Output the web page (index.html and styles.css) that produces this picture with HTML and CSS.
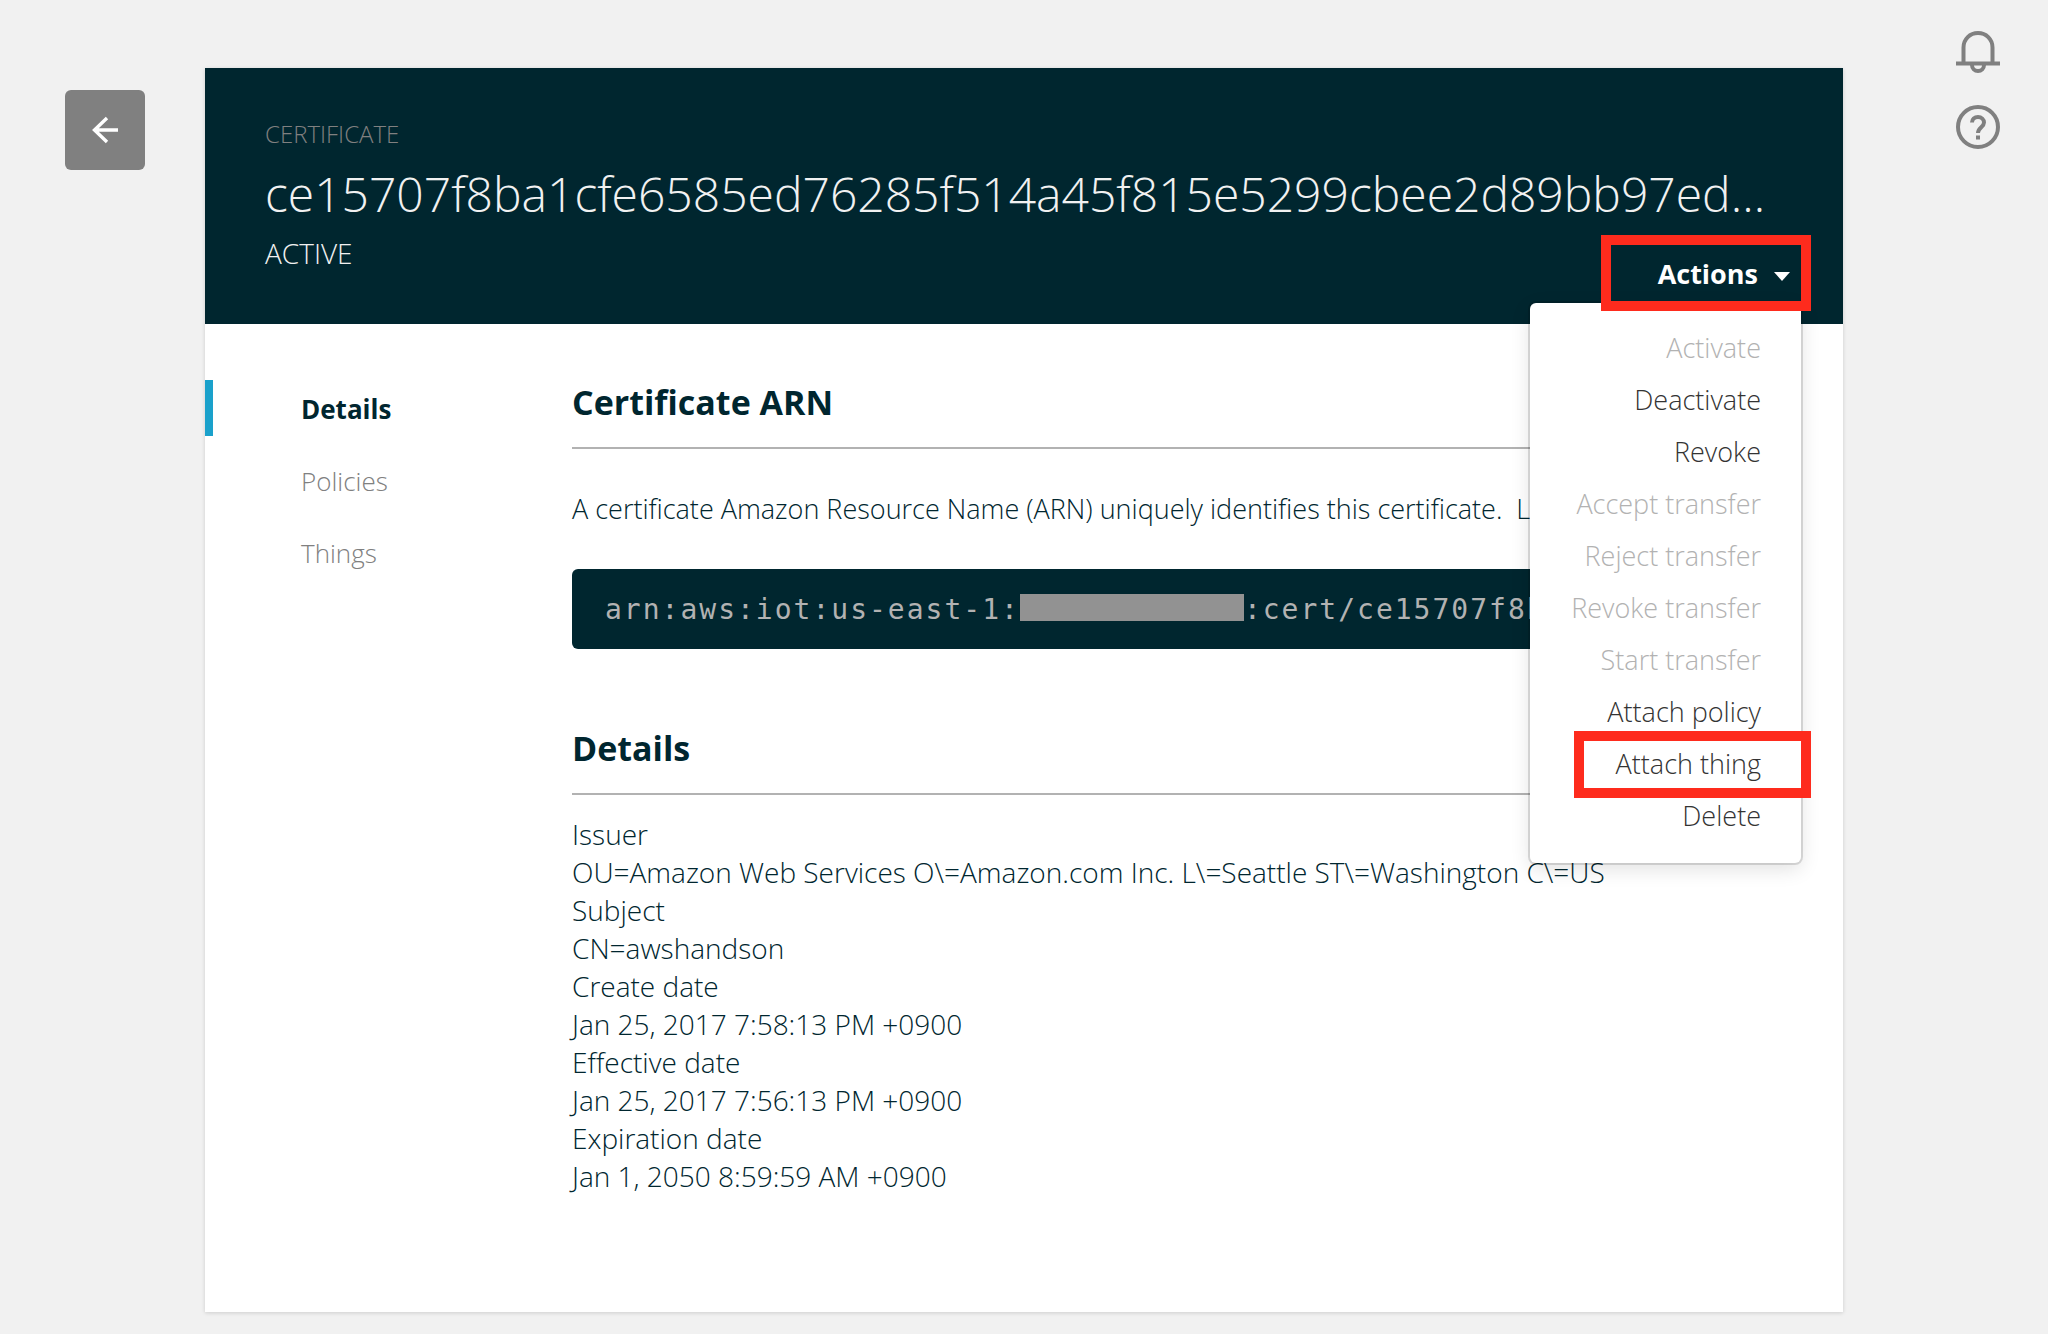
FILE: index.html
```html
<!DOCTYPE html>
<html lang="en">
<head>
<meta charset="utf-8">
<meta name="viewport" content="width=device-width, initial-scale=1">
<title>Certificate</title>
<link rel="stylesheet" href="styles.css">
</head>
<body>
<div class="page">
  <div class="rail rail-left">
    <button class="back" type="button" aria-label="Back">
      <svg width="28" height="28" viewBox="0 0 28 28" fill="none" stroke="currentColor" stroke-width="3.4" aria-hidden="true">
        <path d="M27 14H4M16 2 3.500 14 16 26"/>
      </svg>
    </button>
  </div>

  <main class="card">
    <header class="card-header">
      <p class="kind">CERTIFICATE</p>
      <h1 class="title">ce15707f8ba1cfe6585ed76285f514a45f815e5299cbee2d89bb97ed…</h1>
      <div class="status-row">
        <p class="status">ACTIVE</p>
        <div class="actions">
          <button class="actions-button" type="button" aria-haspopup="true" aria-expanded="true">Actions<span class="caret"></span></button>
          <ul class="menu">
            <li><button type="button" disabled>Activate</button></li>
            <li><button type="button">Deactivate</button></li>
            <li><button type="button">Revoke</button></li>
            <li><button type="button" disabled>Accept transfer</button></li>
            <li><button type="button" disabled>Reject transfer</button></li>
            <li><button type="button" disabled>Revoke transfer</button></li>
            <li><button type="button" disabled>Start transfer</button></li>
            <li><button type="button">Attach policy</button></li>
            <li class="marked"><button type="button">Attach thing</button></li>
            <li><button type="button">Delete</button></li>
          </ul>
        </div>
      </div>
    </header>

    <div class="card-body">
      <nav class="tabs">
        <a class="tab current" href="#details">Details</a>
        <a class="tab" href="#policies">Policies</a>
        <a class="tab" href="#things">Things</a>
      </nav>
      <div class="content">
        <section>
          <h2 class="heading">Certificate ARN</h2>
          <p class="intro">A certificate Amazon Resource Name (ARN) uniquely identifies this certificate. &nbsp;L</p>
          <div class="arn">arn:aws:iot:us-east-1:<span class="redacted"></span>:cert/ce15707f8b</div>
        </section>
        <section id="details">
          <h2 class="heading">Details</h2>
          <dl class="facts">
            <dt>Issuer</dt>
            <dd>OU=Amazon Web Services O\=Amazon.com Inc. L\=Seattle ST\=Washington C\=US</dd>
            <dt>Subject</dt>
            <dd>CN=awshandson</dd>
            <dt>Create date</dt>
            <dd>Jan 25, 2017 7:58:13 PM +0900</dd>
            <dt>Effective date</dt>
            <dd>Jan 25, 2017 7:56:13 PM +0900</dd>
            <dt>Expiration date</dt>
            <dd>Jan 1, 2050 8:59:59 AM +0900</dd>
          </dl>
        </section>
      </div>
    </div>
  </main>

  <div class="rail rail-right">
    <button class="tool" type="button" aria-label="Notifications">
      <svg width="44" height="44" viewBox="0 0 44 44" fill="none" stroke="currentColor" stroke-width="4" aria-hidden="true">
        <path d="M0 33.500H44M7.500 33V17.500C7.500 9 14 3 22 3S36.500 9 36.500 17.500V33"/>
        <path d="M16 35a6 6 0 0 0 12 0"/>
      </svg>
    </button>
    <button class="tool" type="button" aria-label="Help">
      <svg width="44" height="44" viewBox="0 0 44 44" fill="none" stroke="currentColor" stroke-width="4" aria-hidden="true">
        <circle cx="22" cy="22" r="20"/>
        <path d="M16 17.500C16 14 18.500 12 22 12S28 14.500 28 17.500C28 22 22 22.500 22 28M22 30.500V34.500"/>
      </svg>
    </button>
  </div>
</div>
</body>
</html>
```

FILE: styles.css
```css
* {
  box-sizing: border-box;
}

body {
  margin: 0;
  background: #f1f1f1;
  color: #00262f;
  font: 300 28px/38px "Open Sans", "Noto Sans", sans-serif;
}

h1, h2, p, ul, dl, dd {
  margin: 0;
  padding: 0;
}

button {
  border: 0;
  padding: 0;
  background: none;
  color: inherit;
  font: inherit;
}

a {
  color: inherit;
  text-decoration: none;
}

.page {
  display: grid;
  grid-template-columns: 205px minmax(0, 1fr) 205px;
  padding-bottom: 22px;
}

.rail-left {
  padding: 90px 60px 0 65px;
}

.back {
  display: grid;
  place-items: center;
  width: 80px;
  height: 80px;
  border-radius: 6px;
  background: #808080;
  color: #fff;
}

.rail-right {
  display: flex;
  flex-direction: column;
  align-items: flex-end;
  gap: 31px;
  padding: 30px 48px 0 0;
}

.tool {
  height: 44px;
  color: #808080;
}

.tool svg {
  display: block;
}

.card {
  margin-top: 68px;
  background: #fff;
  box-shadow: 0 1px 4px rgba(0, 0, 0, 0.15);
}

.card-header {
  padding: 50px 32px 13px 60px;
  background: #00262f;
  color: #f1f1f1;
}

.kind {
  color: #808080;
  font-size: 24px;
  line-height: 32px;
}

.title {
  margin: 12px 0 9px;
  font-size: 48px;
  font-weight: 300;
  line-height: 64px;
  white-space: nowrap;
}

.status-row {
  display: flex;
  justify-content: space-between;
  align-items: flex-start;
}

.status {
  line-height: 36px;
}

.actions {
  position: relative;
}

.actions-button {
  position: relative;
  z-index: 2;
  display: flex;
  justify-content: flex-end;
  align-items: center;
  gap: 16px;
  width: 210px;
  height: 76px;
  padding: 2px 11px 0 0;
  border: 10px solid #fe2b1d;
  color: #fff;
  font-size: 27px;
  font-weight: 700;
}

.caret {
  margin-top: 4px;
  border: 8px solid transparent;
  border-top: 9px solid #fff;
  border-bottom: 0;
}

.menu {
  position: absolute;
  z-index: 1;
  top: 68px;
  right: 10px;
  width: 271px;
  padding: 19px 0 21px;
  border-radius: 6px;
  background: #fff;
  box-shadow: 0 0 0 2px rgba(0, 0, 0, 0.13), 0 6px 20px rgba(0, 0, 0, 0.12);
  color: #333;
  font-size: 27px;
  list-style: none;
}

.menu button {
  display: block;
  width: 100%;
  height: 52px;
  padding-right: 40px;
  text-align: right;
}

.menu button:disabled {
  color: #b2b2b2;
}

.marked {
  position: relative;
}

.marked::after {
  content: "";
  position: absolute;
  inset: -7px -10px -8px 44px;
  border: 10px solid #fe2b1d;
}

.card-body {
  display: grid;
  grid-template-columns: 367px minmax(0, 1fr);
  padding: 56px 60px 117px 0;
}

.tabs {
  display: flex;
  flex-direction: column;
  gap: 16px;
}

.tab {
  padding: 2px 0 0 88px;
  border-left: 8px solid transparent;
  color: #808080;
  font-size: 26px;
  line-height: 54px;
}

.tab.current {
  border-left-color: #1aa1cb;
  color: #00262f;
  font-weight: 700;
}

.heading {
  padding-bottom: 22px;
  border-bottom: 2px solid #b2b2b2;
  font-size: 34px;
  font-weight: 700;
  line-height: 45px;
}

.intro {
  margin: 41px 0;
  font-size: 27px;
  white-space: nowrap;
}

.arn {
  margin-bottom: 77px;
  padding: 2px 33px 0;
  border-radius: 6px;
  overflow: hidden;
  background: #00262f;
  color: #b2b2b2;
  font: 400 28px/78px "DejaVu Sans Mono", monospace;
  letter-spacing: 2px;
  white-space: nowrap;
}

.redacted {
  display: inline-block;
  width: 224px;
  height: 27px;
  background: #929292;
  vertical-align: -2px;
}

.facts {
  padding-top: 20px;
}
```
